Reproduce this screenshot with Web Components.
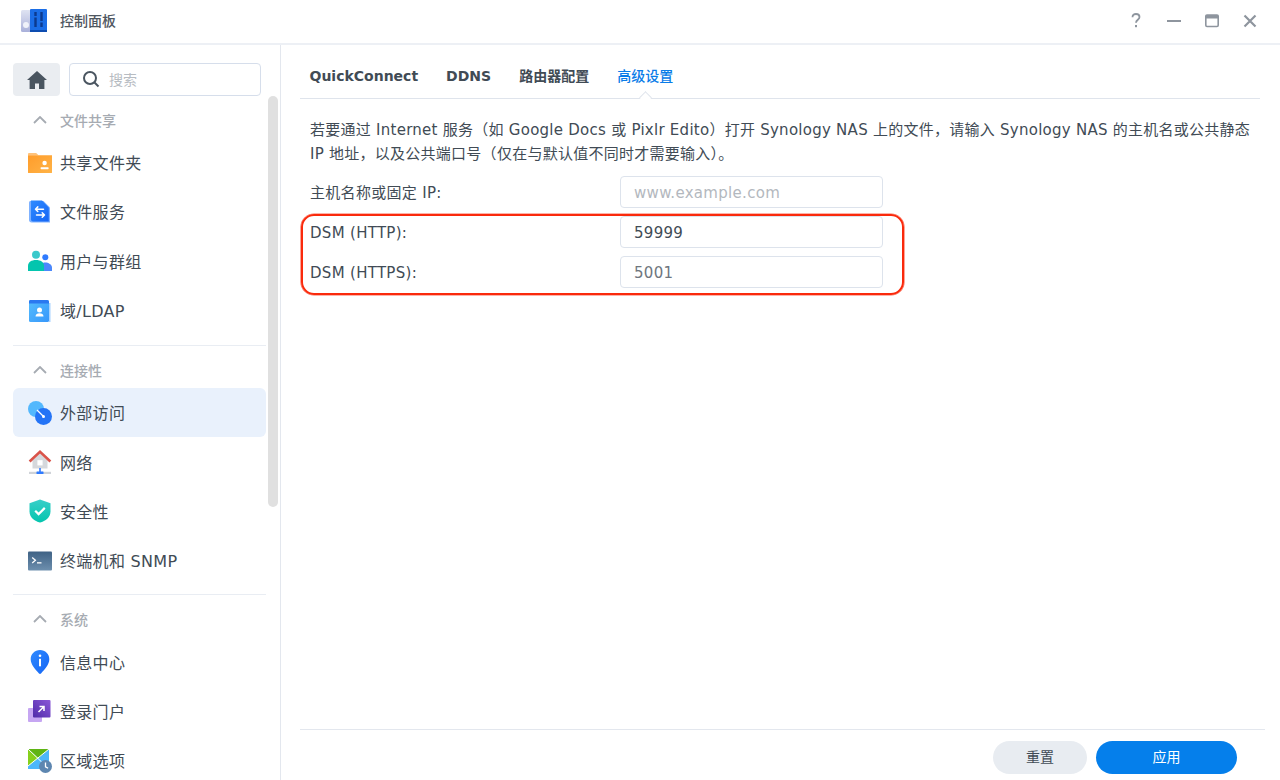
<!doctype html>
<html lang="zh">
<head>
<meta charset="utf-8">
<title>控制面板</title>
<style>
  html, body { margin: 0; height: 100%; overflow: hidden; background: #fff; }
  body { font-family: "DejaVu Sans", "Noto Sans CJK SC", sans-serif; color: #414b55; }
  svg { display: block; }
</style>
</head>
<body>
<svg width="0" height="0" style="position:absolute">
  <defs>
    <linearGradient id="g-orange" x1="0" y1="0" x2="1" y2="1"><stop offset="0" stop-color="#ff9c2a"/><stop offset="1" stop-color="#ffb347"/></linearGradient>
    <linearGradient id="g-blue" x1="0" y1="0" x2="1" y2="1"><stop offset="0" stop-color="#2f8bff"/><stop offset="1" stop-color="#1565f5"/></linearGradient>
    <linearGradient id="g-sky" x1="0" y1="0" x2="1" y2="1"><stop offset="0" stop-color="#55bdfd"/><stop offset="1" stop-color="#3797fb"/></linearGradient>
    <linearGradient id="g-teal" x1="0" y1="0" x2="0" y2="1"><stop offset="0" stop-color="#38cfc9"/><stop offset="1" stop-color="#04c5ae"/></linearGradient>
    <linearGradient id="g-slate" x1="0" y1="0" x2="0" y2="1"><stop offset="0" stop-color="#3f6285"/><stop offset="1" stop-color="#6d8fae"/></linearGradient>
    <linearGradient id="g-purple" x1="1" y1="0" x2="0" y2="1"><stop offset="0" stop-color="#8b58d8"/><stop offset="1" stop-color="#4f2ba8"/></linearGradient>
  </defs>
</svg>

<cp-window>
  <cp-titlebar slot="title" heading="控制面板"></cp-titlebar>

  <cp-sidebar slot="side">
    <cp-section label="文件共享">
      <cp-nav-item label="共享文件夹">
        <svg slot="icon" width="24" height="24" viewBox="0 0 24 24"><path d="M0 3.200C0 2.500.5 2 1.200 2h7l2.300 2.200H0z" fill="#ffc27a"/><path d="M0 4.200h24v17.200c0 .4-.3.6-.6.6H.6c-.3 0-.6-.2-.6-.6z" fill="url(#g-orange)"/><circle cx="16.600" cy="12" r="2.200" fill="#fff"/><rect x="12.600" y="16.200" width="8" height="2" rx=".6" fill="#fff"/></svg>
      </cp-nav-item>
      <cp-nav-item label="文件服务">
        <svg slot="icon" width="24" height="24" viewBox="0 0 24 24"><path d="M1 2.500C1 1.700 1.700 1 2.500 1h13l6.500 6.500v15H3.500C2.100 22.500 1 21.400 1 20z" fill="#7fb2ff"/><path d="M3 .6h11l6.800 6.900v14H5c-1.100 0-2-.9-2-2z" fill="url(#g-blue)"/><path d="M7.500 9.200h8M7.500 9.200l2.300-2.300M7.500 9.200l2.300 2.300M16.500 15h-8M16.500 15l-2.300-2.300M16.500 15l-2.300 2.300" stroke="#fff" stroke-width="1.500" fill="none" stroke-linecap="round" stroke-linejoin="round"/></svg>
      </cp-nav-item>
      <cp-nav-item label="用户与群组">
        <svg slot="icon" width="24" height="24" viewBox="0 0 24 24"><circle cx="17.300" cy="8.200" r="3" fill="#2f7bff"/><path d="M12 22v-3.500c0-3 2.300-5 5.300-5s6.700 2 6.700 5V22z" fill="#4b88fb"/><circle cx="8" cy="5.800" r="4" fill="#3ac9cb"/><path d="M0 22v-5c0-4 3.500-6 8-6s8 2 8 6v5z" fill="#04c5ae"/></svg>
      </cp-nav-item>
      <cp-nav-item label="域/LDAP">
        <svg slot="icon" width="24" height="24" viewBox="0 0 24 24"><rect x="1" y="1" width="20" height="22" rx="1.500" fill="url(#g-sky)"/><path d="M1 4.500V2.500C1 1.700 1.700 1 2.500 1H19c1.100 0 2 .9 2 2v1.500z" fill="#2b78f0"/><rect x="21" y="4" width="1.500" height="19" fill="#a9d3ff"/><circle cx="11.500" cy="11" r="2.500" fill="#fff"/><path d="M7.500 17.500c0-2.200 1.800-3.200 4-3.200s4 1 4 3.200z" fill="#fff"/></svg>
      </cp-nav-item>
    </cp-section>

    <cp-section label="连接性" divided>
      <cp-nav-item label="外部访问" active>
        <svg slot="icon" width="24" height="24" viewBox="0 0 24 24"><circle cx="8" cy="8" r="8" fill="#53b8fd"/><circle cx="15.500" cy="15.500" r="8.500" fill="#2474f6"/><path d="M9 9l6.500 6.500" stroke="#fff" stroke-width="1.300"/><circle cx="15.500" cy="15.500" r="1.500" fill="#fff"/></svg>
      </cp-nav-item>
      <cp-nav-item label="网络">
        <svg slot="icon" width="24" height="24" viewBox="0 0 24 24"><path d="M4.500 10.500L12 3.500l7.500 7v8h-15z" fill="#d5d8dc"/><rect x="9.400" y="10.200" width="5.200" height="5.200" fill="#fff"/><path d="M1.600 11.500L12 1.800l10.400 9.700" fill="none" stroke="#d9534a" stroke-width="2.600"/><rect x="1" y="21.800" width="22" height="2.200" fill="#cfd3d8"/><rect x="11.200" y="18" width="1.600" height="4" fill="#2f7bff"/><rect x="8.500" y="21.500" width="7" height="2.500" rx=".5" fill="#2f7bff"/></svg>
      </cp-nav-item>
      <cp-nav-item label="安全性">
        <svg slot="icon" width="24" height="24" viewBox="0 0 24 24"><path d="M12 .5l10.500 3.700v8c0 6.300-5 9.900-10.500 11.300C6.500 22.100 1.500 18.500 1.500 12.200v-8z" fill="url(#g-teal)"/><path d="M7.200 11.700l3.400 3.400 6.200-6.200" fill="none" stroke="#fff" stroke-width="2.200"/></svg>
      </cp-nav-item>
      <cp-nav-item label="终端机和 SNMP">
        <svg slot="icon" width="24" height="24" viewBox="0 0 24 24"><rect x="0" y="2.500" width="24" height="19" rx="1" fill="url(#g-slate)"/><path d="M4.200 8.500l3.200 2.800-3.200 2.800" fill="none" stroke="#fff" stroke-width="1.300"/><rect x="9" y="13.200" width="4.500" height="1.300" fill="#fff"/></svg>
      </cp-nav-item>
    </cp-section>

    <cp-section label="系统" divided>
      <cp-nav-item label="信息中心">
        <svg slot="icon" width="24" height="24" viewBox="0 0 24 24"><path d="M12 0c5.200 0 9.300 4 9.300 9.200 0 5.300-4.500 9.800-8.300 14.300-.5.600-1.500.6-2 0C7.200 19 2.700 14.500 2.700 9.200 2.700 4 6.800 0 12 0z" fill="url(#g-blue)"/><circle cx="12" cy="5.800" r="1.300" fill="#fff"/><rect x="11" y="8.800" width="2" height="7.500" fill="#fff"/></svg>
      </cp-nav-item>
      <cp-nav-item label="登录门户">
        <svg slot="icon" width="24" height="24" viewBox="0 0 24 24"><rect x="0" y="9" width="14" height="14" rx="1" fill="#c6a6f2"/><rect x="5" y="1" width="17.500" height="17.500" rx="1" fill="url(#g-purple)"/><path d="M10.500 13L16 7.500M11.500 7.500H16V12" fill="none" stroke="#fff" stroke-width="1.500"/></svg>
      </cp-nav-item>
      <cp-nav-item label="区域选项">
        <svg slot="icon" width="24" height="24" viewBox="0 0 24 24"><rect x="0" y="0" width="21" height="20" fill="#4db7fb"/><path d="M0 0h21l-10.500 9z" fill="#5fb414"/><path d="M0 0l10.500 9L0 17z" fill="#86d01c"/><path d="M0 0l21 20M21 0L0 17" stroke="#fff" stroke-width="1" fill="none"/><circle cx="17.500" cy="17.500" r="6.500" fill="#5d86b0"/><path d="M17.500 13.500v4.300l2.600 1.500" fill="none" stroke="#fff" stroke-width="1.300"/></svg>
      </cp-nav-item>
    </cp-section>
  </cp-sidebar>

  <cp-panel slot="main">
    <cp-tabs active="3" items="QuickConnect|DDNS|路由器配置|高级设置"></cp-tabs>
    <cp-form>
      <p>若要通过 Internet 服务（如 Google Docs 或 Pixlr Edito）打开 Synology NAS 上的文件，请输入 Synology NAS 的主机名或公共静态 IP 地址，以及公共端口号（仅在与默认值不同时才需要输入）。</p>
      <cp-field label="主机名称或固定 IP:" placeholder="www.example.com"></cp-field>
      <cp-highlight>
        <cp-field label="DSM (HTTP):" value="59999"></cp-field>
        <cp-field label="DSM (HTTPS):" value="5001" muted></cp-field>
      </cp-highlight>
    </cp-form>
    <cp-footer></cp-footer>
  </cp-panel>
</cp-window>

<script>
class CpWindow extends HTMLElement {
  constructor() {
    super();
    this.attachShadow({ mode: 'open' }).innerHTML = `
      <style>
        :host {
          display: grid;
          grid-template-rows: 45px 1fr;
          grid-template-columns: 281px 1fr;
          width: 1280px;
          height: 780px;
          overflow: hidden;
        }
        ::slotted([slot="title"]) { grid-column: 1 / 3; }
      </style>
      <slot name="title"></slot>
      <slot name="side"></slot>
      <slot name="main"></slot>`;
  }
}

class CpTitlebar extends HTMLElement {
  constructor() {
    super();
    this.attachShadow({ mode: 'open' }).innerHTML = `
      <style>
        :host {
          display: flex;
          align-items: center;
          box-sizing: border-box;
          height: 45px;
          padding: 0 21px 2px 21px;
          border-bottom: 2px solid #edf0f5;
        }
        .logo { margin-right: 13px; }
        h1 { flex: 1; margin: 0; padding-bottom: 2px; font-size: 14px; font-weight: 500; color: #4f5761; }
        .tools { display: flex; align-items: center; gap: 20px; }
      </style>
      <svg class="logo" width="26" height="24" viewBox="0 0 26 24">
        <defs><linearGradient id="lg" x1="0" y1="0" x2="0" y2="1"><stop offset="0" stop-color="#dfe3f2"/><stop offset="1" stop-color="#a9b0da"/></linearGradient></defs>
        <rect x="0" y="1" width="11" height="22" rx="1.500" fill="url(#lg)"/>
        <circle cx="5" cy="16" r="3" fill="#f0f2fa"/>
        <rect x="9" y="0" width="17" height="23" rx="1" fill="#1a6de6"/>
        <rect x="9" y="21" width="17" height="2" fill="#0d4cb0"/>
        <path d="M14.500 3v15M20.500 3v15" stroke="#0c3a8e" stroke-width="2.400"/>
        <rect x="13" y="7" width="3" height="1.500" fill="#1a6de6"/>
        <rect x="19" y="12" width="3" height="1.500" fill="#1a6de6"/>
      </svg>
      <h1>${this.getAttribute('heading')}</h1>
      <div class="tools">
        <svg width="18" height="18" viewBox="0 0 18 18"><path d="M5.500 5.200C5.500 3 7 2 9 2s3.500 1.100 3.500 3c0 2.600-3.500 2.900-3.500 5.800" fill="none" stroke="#8e959e" stroke-width="1.800"/><rect x="8" y="13" width="2" height="2.200" fill="#8e959e"/></svg>
        <svg width="18" height="18" viewBox="0 0 18 18"><rect x="2" y="8" width="14" height="2" fill="#8e959e"/></svg>
        <svg width="18" height="18" viewBox="0 0 18 18"><rect x="2.800" y="3" width="12.400" height="11.500" rx="1.200" fill="none" stroke="#8e959e" stroke-width="1.600"/><rect x="2.800" y="3" width="12.400" height="3.500" fill="#8e959e"/></svg>
        <svg width="18" height="18" viewBox="0 0 18 18"><path d="M3.500 3.500l11 11M14.500 3.500l-11 11" stroke="#8e959e" stroke-width="2.200"/></svg>
      </div>`;
  }
}

class CpSidebar extends HTMLElement {
  constructor() {
    super();
    this.attachShadow({ mode: 'open' }).innerHTML = `
      <style>
        :host {
          display: block;
          position: relative;
          box-sizing: border-box;
          height: 735px;
          padding: 18px 14px 0 13px;
          border-right: 1px solid #e3e7ee;
          overflow: hidden;
        }
        .top { display: flex; gap: 9px; margin-right: 5px; }
        .home {
          display: flex; align-items: center; justify-content: center;
          width: 47px; height: 33px;
          background: #eaedf1; border-radius: 4px;
        }
        .search {
          flex: 1; display: flex; align-items: center; gap: 9px;
          height: 33px; box-sizing: border-box; padding: 0 0 1px 12px;
          border: 1px solid #d6deeb; border-radius: 4px;
          font-size: 14px; color: #b7bcc2;
        }
        .bar {
          position: absolute; left: 268px; top: 51px;
          width: 10px; height: 411px;
          background: #e0e0e0; border-radius: 5px;
        }
      </style>
      <div class="top">
        <div class="home">
          <svg width="20" height="18" viewBox="0 0 20 18"><path d="M10 0l10 9h-2.600v9H12v-5.500H8V18H2.600V9H0z" fill="#4a5560"/></svg>
        </div>
        <div class="search">
          <svg width="18" height="18" viewBox="0 0 18 18"><circle cx="8" cy="8" r="6" fill="none" stroke="#4a5560" stroke-width="2"/><path d="M12.500 12.500l4 4" stroke="#4a5560" stroke-width="2"/></svg>
          <span>搜索</span>
        </div>
      </div>
      <slot></slot>
      <div class="bar"></div>`;
  }
}

class CpSection extends HTMLElement {
  constructor() {
    super();
    this.attachShadow({ mode: 'open' }).innerHTML = `
      <style>
        :host { display: block; }
        :host(:not([divided])) { padding-bottom: 1px; }
        :host([divided]) { border-top: 1px solid #e9edf3; margin-top: 9px; }
        .head {
          display: flex; align-items: center;
          height: 48px; padding-left: 20px; box-sizing: border-box;
          font-size: 14px; font-weight: 500; color: #a6abb2;
        }
        :host(:not([divided])) .head { height: 47px; }
        svg { margin-right: 13px; }
        .items { margin-top: -6px; }
        :host(:not([divided])) .items { margin-top: -5px; }
      </style>
      <div class="head">
        <svg width="14" height="8" viewBox="0 0 14 8"><path d="M1 7l6-6 6 6" fill="none" stroke="#a6abb2" stroke-width="1.800"/></svg>
        <span>${this.getAttribute('label')}</span>
      </div>
      <div class="items"><slot></slot></div>`;
  }
}

class CpNavItem extends HTMLElement {
  constructor() {
    super();
    this.attachShadow({ mode: 'open' }).innerHTML = `
      <style>
        :host {
          display: flex; align-items: center;
          height: 49.300px; box-sizing: border-box;
          padding-left: 15px;
          border-radius: 6px;
          font-size: 16px; color: #414b55; letter-spacing: .3px;
        }
        :host([active]) { background: #e9f1fc; }
        .icon { width: 24px; height: 24px; margin-right: 8px; flex: none; }
        span { padding-bottom: 1px; }
      </style>
      <div class="icon"><slot name="icon"></slot></div>
      <span>${this.getAttribute('label')}</span>`;
  }
}

class CpPanel extends HTMLElement {
  constructor() {
    super();
    this.attachShadow({ mode: 'open' }).innerHTML = `
      <style>
        :host {
          display: flex; flex-direction: column;
          height: 735px; box-sizing: border-box;
          padding: 0 20px 0 19px;
        }
      </style>
      <slot></slot>`;
  }
}

class CpTabs extends HTMLElement {
  constructor() {
    super();
    const items = this.getAttribute('items').split('|');
    const active = Number(this.getAttribute('active'));
    this.attachShadow({ mode: 'open' }).innerHTML = `
      <style>
        :host {
          display: flex; gap: 28px;
          height: 54px; box-sizing: border-box;
          padding-left: 9.500px;
          border-bottom: 1px solid #dfe4ec;
          font-size: 14px; font-weight: 700; color: #414b55;
        }
        .tab { position: relative; line-height: 63px; height: 53px; }
        .tab.on { color: #0a7ce8; font-weight: 500; }
        .tab.on::after {
          content: ''; position: absolute; left: 50%; bottom: -4px;
          width: 8px; height: 8px; margin-left: -4px;
          background: #fff;
          border-left: 1px solid #dfe4ec; border-top: 1px solid #dfe4ec;
          transform: rotate(45deg);
        }
      </style>
      ${items.map((t, i) => `<div class="tab${i === active ? ' on' : ''}">${t}</div>`).join('')}`;
  }
}

class CpForm extends HTMLElement {
  constructor() {
    super();
    this.attachShadow({ mode: 'open' }).innerHTML = `
      <style>
        :host {
          flex: 1; display: flex; flex-direction: column; gap: 8px;
          padding-left: 10px;
          font-size: 15px; color: #414b55;
        }
        ::slotted(p) {
          margin: 19px 0 2px;
          width: 945px;
          line-height: 24px;
          letter-spacing: .26px;
          font-size: 15px;
        }
      </style>
      <slot></slot>`;
  }
}

class CpField extends HTMLElement {
  constructor() {
    super();
    const value = this.getAttribute('value');
    const placeholder = this.getAttribute('placeholder');
    this.attachShadow({ mode: 'open' }).innerHTML = `
      <style>
        :host {
          display: flex; align-items: center;
          height: 32px;
          font-size: 15px; color: #414b55; letter-spacing: .3px;
        }
        label { width: 310px; flex: none; position: relative; top: var(--label-shift, -1px); }
        .input {
          width: 263px; height: 32px; box-sizing: border-box;
          padding-left: 13px; line-height: 32px;
          border: 1px solid #dde3ec; border-radius: 4px;
          color: #414b55;
        }
        .ph { color: #b3b8be; }
        :host([muted]) .input { color: #6f767e; }
      </style>
      <label>${this.getAttribute('label')}</label>
      <div class="input">${value ? value : `<span class="ph">${placeholder}</span>`}</div>`;
  }
}

class CpHighlight extends HTMLElement {
  constructor() {
    super();
    this.attachShadow({ mode: 'open' }).innerHTML = `
      <style>
        :host {
          --label-shift: 1px;
          display: flex; flex-direction: column; gap: 8px;
          width: 603px; box-sizing: border-box;
          margin: -2px 0 0 -9px;
          padding: 0 0 5px 7px;
          border: 2px solid #fa2a0c;
          border-radius: 13px;
          box-shadow: 0 0 0 .6px rgba(250, 42, 12, .7);
        }
      </style>
      <slot></slot>`;
  }
}

class CpFooter extends HTMLElement {
  constructor() {
    super();
    this.attachShadow({ mode: 'open' }).innerHTML = `
      <style>
        :host {
          display: flex; justify-content: flex-end; gap: 9px;
          box-sizing: border-box; height: 51px;
          padding: 11px 28px 0 0;
          margin-right: -5px;
          border-top: 1px solid #e3e7ee;
        }
        button {
          border: none; height: 33px; border-radius: 17px;
          padding: 0 0 3px;
          font: inherit; font-size: 14px; cursor: pointer;
        }
        .reset { width: 94px; background: #e8ecf1; color: #414b55; }
        .apply { width: 141px; background: #057feb; color: #fff; }
      </style>
      <button class="reset" type="button">重置</button>
      <button class="apply" type="button">应用</button>`;
  }
}

customElements.define('cp-window', CpWindow);
customElements.define('cp-titlebar', CpTitlebar);
customElements.define('cp-sidebar', CpSidebar);
customElements.define('cp-section', CpSection);
customElements.define('cp-nav-item', CpNavItem);
customElements.define('cp-panel', CpPanel);
customElements.define('cp-tabs', CpTabs);
customElements.define('cp-form', CpForm);
customElements.define('cp-field', CpField);
customElements.define('cp-highlight', CpHighlight);
customElements.define('cp-footer', CpFooter);
</script>
</body>
</html>
